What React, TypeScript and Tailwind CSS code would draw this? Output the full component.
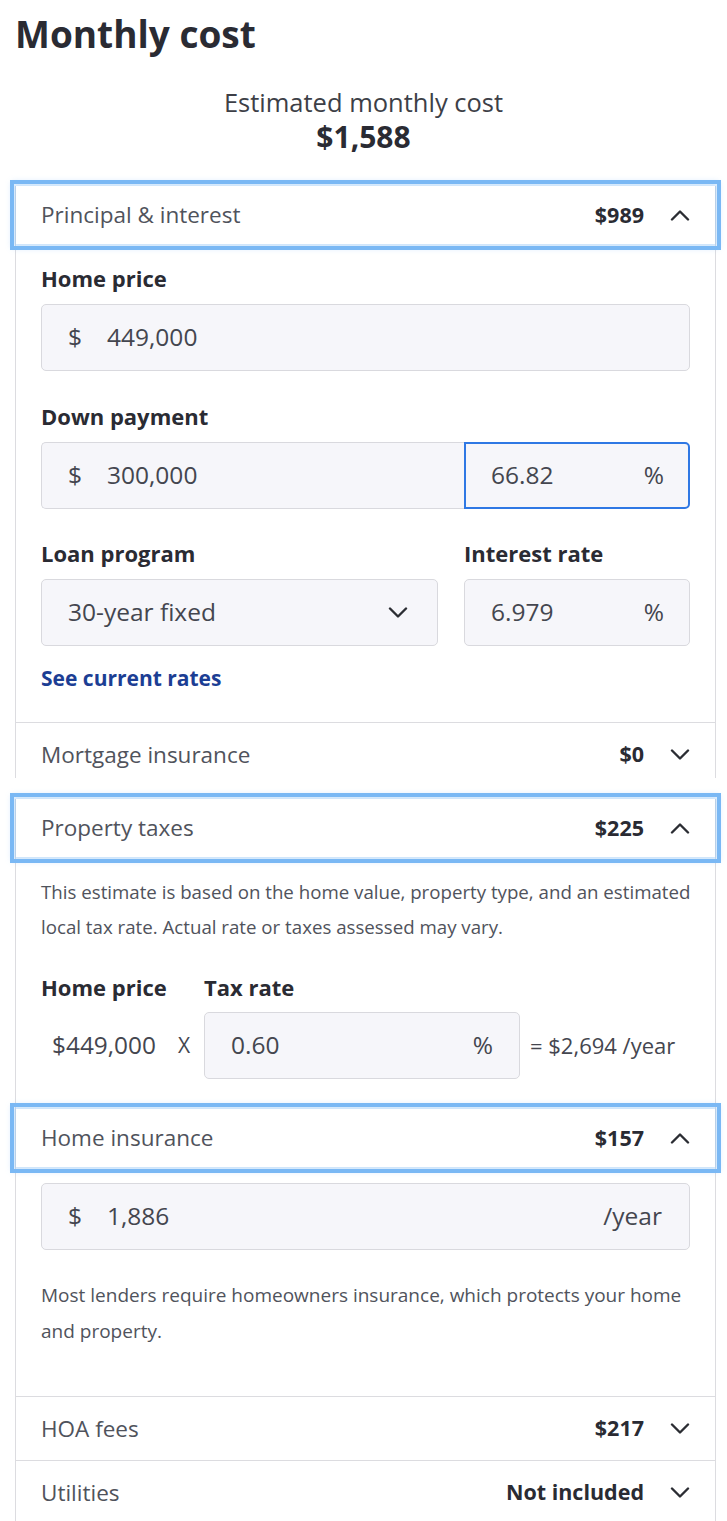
import type { ReactNode } from "react";

const font = { fontFamily: '"Open Sans", "Liberation Sans", sans-serif' };

function Chevron({ up }: { up?: boolean }) {
  return (
    <svg width="20" height="12" viewBox="0 0 20 12" fill="none" className="shrink-0">
      <polyline
        points={up ? "2,10.5 10,2.5 18,10.5" : "2,1.5 10,9.5 18,1.5"}
        stroke="#2b2d33"
        strokeWidth="2.4"
        strokeLinecap="round"
        strokeLinejoin="round"
      />
    </svg>
  );
}

function Header({ title, value, open }: { title: string; value: string; open?: boolean }) {
  return (
    <div className="relative z-10 flex h-[58px] items-center bg-white pl-[25px] pr-[25px] outline-4 outline-offset-2 outline-[#7ab8f4] shadow-[0_0_6px_4px_rgba(122,184,244,0.4)]">
      <span className="flex-1 text-[22.5px] text-[#50535c]">{title}</span>
      <span className="text-[21.5px] font-bold text-[#2a2b33]">{value}</span>
      <span className="ml-[26px]">
        <Chevron up={open} />
      </span>
    </div>
  );
}

function Row({ title, value, first }: { title: string; value: string; first?: boolean }) {
  return (
    <div
      className={
        "flex items-center border-t border-[#dcdce0] pl-[25px] pr-[25px] " +
        (first ? "h-[56px] pt-[8px]" : "h-[64px]")
      }
    >
      <span className="flex-1 text-[22.5px] text-[#50535c]">{title}</span>
      <span className="text-[21.5px] font-bold text-[#2a2b33]">{value}</span>
      <span className="ml-[26px]">
        <Chevron />
      </span>
    </div>
  );
}

function Label({ children }: { children: ReactNode }) {
  return <div className="text-[22px] leading-[28px] font-bold text-[#2a2b33]">{children}</div>;
}

function Field({
  prefix,
  value,
  suffix,
  className,
}: {
  prefix?: string;
  value: string;
  suffix?: ReactNode;
  className: string;
}) {
  return (
    <div className={"flex h-[67px] items-center bg-[#f6f6fa] text-[24.5px] text-[#44464f] " + className}>
      {prefix && <span className="w-[39px] shrink-0">{prefix}</span>}
      <span className="flex-1">{value}</span>
      {suffix}
    </div>
  );
}

export default function App() {
  return (
    <div className="w-[727px] bg-white pb-[40px]" style={font}>
      <h1 className="pl-[15px] pt-[10px] text-[37px] leading-[48px] font-bold text-[#2a2b33]">Monthly cost</h1>

      <div className="mt-[29px] text-center">
        <div className="text-[25.5px] leading-[30px] text-[#3d3f47]">Estimated monthly cost</div>
        <div className="text-[30px] leading-[40px] font-bold text-[#2a2b33]">$1,588</div>
      </div>

      {/* principal & interest + mortgage insurance */}
      <div className="mt-[29px] ml-[15px] mr-[11px] border-x border-[#dcdce0]">
        <Header title="Principal & interest" value="$989" open />
        <div className="pl-[25px] pr-[25px] pt-[20px] pb-[31px]">
          <Label>Home price</Label>
          <Field
            prefix="$"
            value="449,000"
            className="mt-[12px] rounded-[5px] border border-[#d9d9de] pl-[26px]"
          />

          <div className="mt-[31px]">
            <Label>Down payment</Label>
          </div>
          <div className="mt-[12px] flex">
            <Field
              prefix="$"
              value="300,000"
              className="w-[423px] rounded-l-[5px] border border-r-0 border-[#d9d9de] pl-[26px]"
            />
            <Field
              value="66.82"
              suffix={<span>%</span>}
              className="flex-1 rounded-r-[5px] border-2 border-[#2f78e4] pl-[25px] pr-[24px]"
            />
          </div>

          <div className="mt-[30px] flex gap-[26px]">
            <div className="w-[397px]">
              <Label>Loan program</Label>
              <Field
                value="30-year fixed"
                suffix={
                  <span className="mr-[1px]">
                    <Chevron />
                  </span>
                }
                className="mt-[12px] rounded-[5px] border border-[#d9d9de] pl-[26px] pr-[28px]"
              />
            </div>
            <div className="flex-1">
              <Label>Interest rate</Label>
              <Field
                value="6.979"
                suffix={<span>%</span>}
                className="mt-[12px] rounded-[5px] border border-[#d9d9de] pl-[26px] pr-[25px]"
              />
            </div>
          </div>

          <div className="mt-[19px] text-[21px] leading-[26px] font-bold text-[#1c3e94]">See current rates</div>
        </div>
        <Row title="Mortgage insurance" value="$0" first />
      </div>

      {/* property taxes, home insurance, hoa, utilities */}
      <div className="mt-[21px] ml-[15px] mr-[11px] border-x border-[#dcdce0]">
        <Header title="Property taxes" value="$225" open />
        <div className="pl-[25px] pr-[25px] pt-[17px] pb-[30px]">
          <p className="-mr-[10px] text-[18.7px] leading-[35px] text-[#50535c]">
            This estimate is based on the home value, property type, and an estimated local tax rate. Actual rate
            or taxes assessed may vary.
          </p>
          <div className="mt-[29px] flex">
            <div className="w-[163px]">
              <Label>Home price</Label>
            </div>
            <Label>Tax rate</Label>
          </div>
          <div className="mt-[11px] flex items-center">
            <div className="flex w-[163px] items-center pl-[11px] text-[24.4px] text-[#44464f]">
              <span>$449,000</span>
              <span className="ml-[22px] text-[21px]">X</span>
            </div>
            <Field
              value="0.60"
              suffix={<span>%</span>}
              className="w-[316px] rounded-[5px] border border-[#d9d9de] pl-[26px] pr-[26px]"
            />
            <span className="ml-[10px] text-[22px] text-[#44464f]">= $2,694 /year</span>
          </div>
        </div>

        <Header title="Home insurance" value="$157" open />
        <div className="pl-[25px] pr-[25px] pt-[16px] pb-[47px]">
          <Field
            prefix="$"
            value="1,886"
            suffix={<span>/year</span>}
            className="rounded-[5px] border border-[#d9d9de] pl-[26px] pr-[27px]"
          />
          <p className="mt-[27px] text-[19px] leading-[36px] text-[#50535c]">
            Most lenders require homeowners insurance, which protects your home and property.
          </p>
        </div>
        <Row title="HOA fees" value="$217" />
        <Row title="Utilities" value="Not included" />
      </div>
    </div>
  );
}
